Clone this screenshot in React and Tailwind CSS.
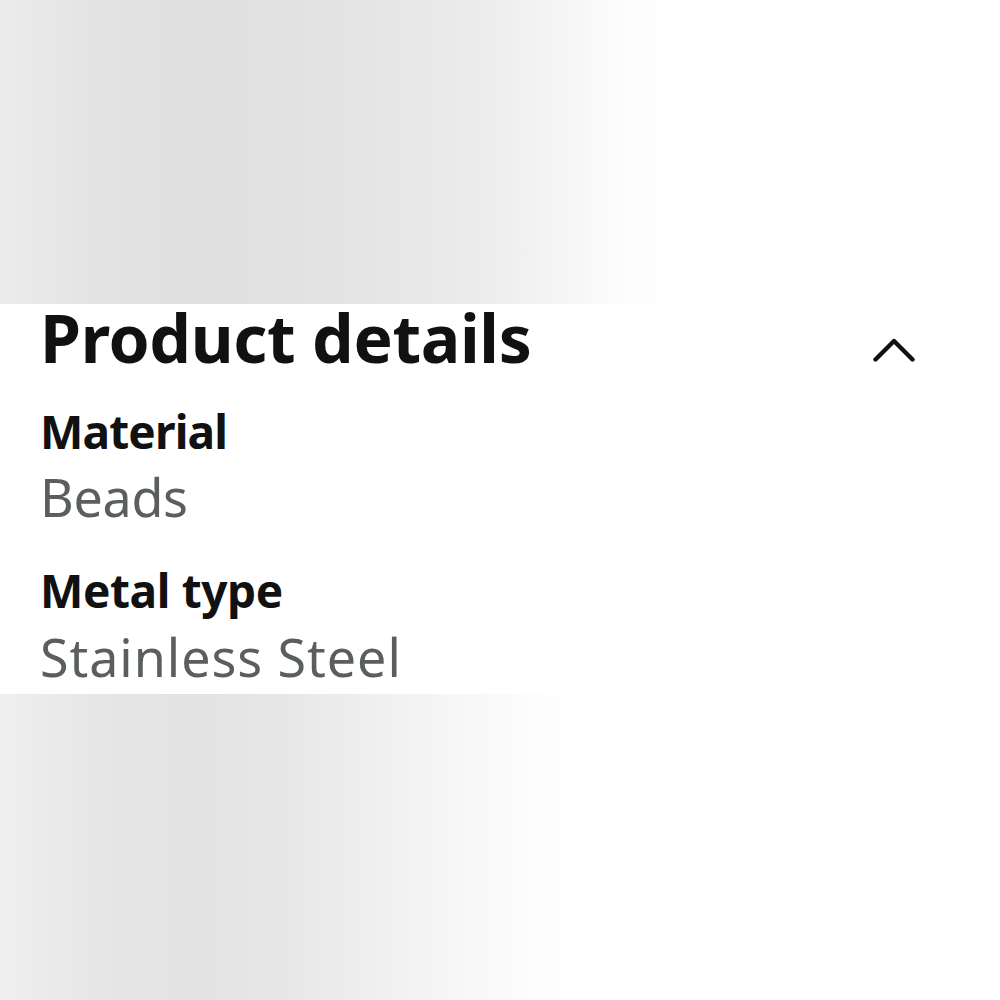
import React from "react";

export default function App() {
  return (
    <div className="w-[1000px] h-[1000px] flex flex-col bg-white" style={{ fontFamily: "'Noto Sans', 'Open Sans', sans-serif" }}>
      <div className="h-[304px] bg-[linear-gradient(to_right,#ececec_0%,#e3e3e3_10%,#dfdfdf_20%,#e4e4e4_35%,#ececec_48%,#f5f5f5_56%,#fdfdfd_63%,#ffffff_68%,#ffffff_100%)]" />
      <div className="h-[390px] bg-white pl-[40px] pr-[85px] flex flex-col">
        <div className="flex justify-between items-start">
          <h2 className="text-[66px] leading-[66px] font-bold tracking-[-0.35px] text-[#111111]">Product details</h2>
          <svg className="mt-[34px]" width="42" height="25" viewBox="0 0 42 25" fill="none">
            <polyline points="2.5,21.5 21,3 39.5,21.5" stroke="#111111" strokeWidth="4.4" strokeLinecap="round" strokeLinejoin="round" />
          </svg>
        </div>
        <div className="mt-[38px] text-[46px] leading-[46px] font-bold tracking-[-0.85px] text-[#111111]">Material</div>
        <div className="mt-[17px] text-[52px] leading-[52px] tracking-[-0.3px] text-[#5a5e5e]">Beads</div>
        <div className="mt-[44px] text-[46px] leading-[46px] font-bold tracking-[-0.4px] text-[#111111]">Metal type</div>
        <div className="mt-[18px] text-[52px] leading-[52px] tracking-[0.95px] text-[#5a5e5e]">Stainless Steel</div>
      </div>
      <div className="h-[306px] bg-[linear-gradient(to_right,#efefef_0%,#e6e6e6_10%,#e3e3e3_20%,#e8e8e8_30%,#f0f0f0_38%,#f7f7f7_46%,#fdfdfd_54%,#ffffff_58%,#ffffff_100%)]" />
    </div>
  );
}
